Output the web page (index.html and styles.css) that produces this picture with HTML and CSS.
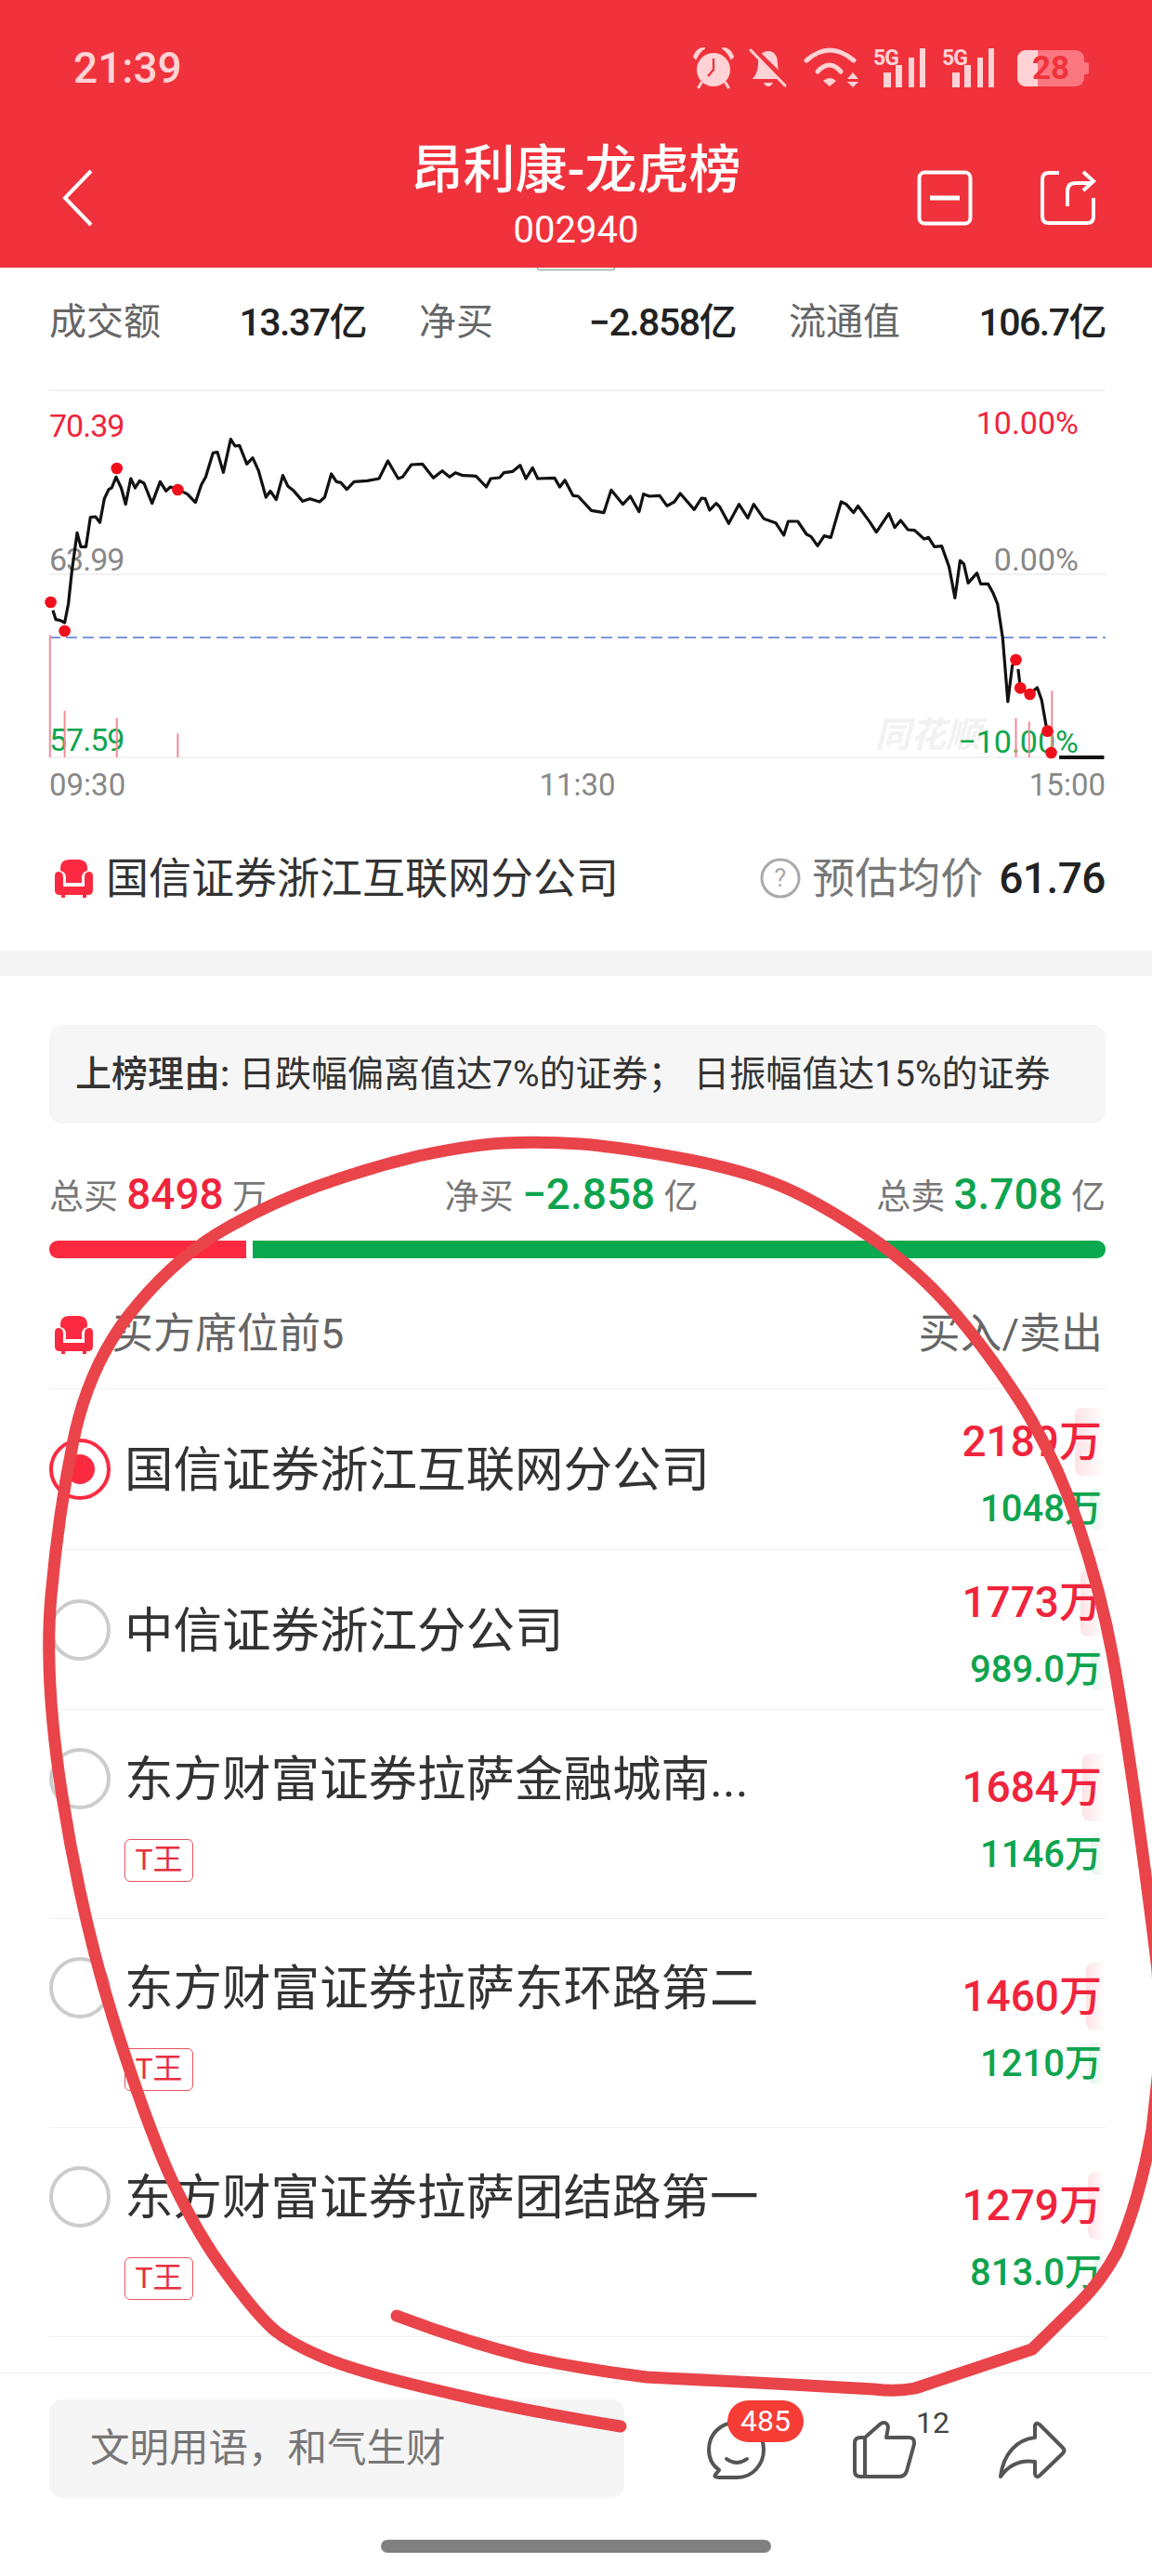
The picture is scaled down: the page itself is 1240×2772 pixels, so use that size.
FILE: index.html
```html
<!DOCTYPE html>
<html lang="zh-CN">
<head>
    <meta charset="UTF-8">
    <meta name="viewport" content="width=device-width, initial-scale=1.0">
    <title>昂利康-龙虎榜</title>
    <link rel="stylesheet" href="styles.css">
</head>
<body>
    <header class="top">
        <div class="status">
            <span class="clock">21:39</span>
            <div class="status-icons">
                <svg class="ic-alarm" width="46" height="46" viewBox="0 0 46 46">
                    <circle cx="23" cy="25" r="18" fill="#ffd3d6"/>
                    <path d="M2 11 Q5 2 13 2 Q8 5 4 13Z M44 11 Q41 2 33 2 Q38 5 42 13Z" fill="#ffd3d6" stroke="#ffd3d6" stroke-width="2" stroke-linejoin="round"/>
                    <path d="M10 39 L7 44 M36 39 L39 44" stroke="#ffd3d6" stroke-width="3" stroke-linecap="round"/>
                    <path d="M23 13 V25 L17 32" fill="none" stroke="#f0323c" stroke-width="2.4"/>
                </svg>
                <svg class="ic-bell" width="40" height="42" viewBox="0 0 40 42">
                    <path d="M20 3 C27 3 30 9 30 16 C30 24 33 28 36 33 H3 C6 29 9 25 9 16 C9 9 13 3 20 3Z" fill="#ffd3d6"/>
                    <path d="M15 37 H25 Q23 41 20 41 Q17 41 15 37Z" fill="#ffd3d6"/>
                    <path d="M3 1 L42 39" stroke="#f0323c" stroke-width="7"/>
                    <path d="M1 2 L38 40" stroke="#ffd3d6" stroke-width="3" stroke-linecap="round"/>
                </svg>
                <svg class="ic-wifi" width="60" height="44" viewBox="0 0 60 44">
                    <path d="M3 14 Q28 -8 54 14" fill="none" stroke="#ffd3d6" stroke-width="5" stroke-linecap="round"/>
                    <path d="M15 26 Q28 12 40 26" fill="none" stroke="#ffd3d6" stroke-width="5" stroke-linecap="round"/>
                    <path d="M21 36 Q28 30 35 36 L28 42Z" fill="#ffd3d6"/>
                    <path d="M47 34 L53 27 L59 34Z M47 37 L59 37 L53 43Z" fill="#ffd3d6"/>
                </svg>
                <svg class="ic-signal" width="60" height="44" viewBox="0 0 60 44">
                    <text x="0" y="19" class="ic-5g">5G</text>
                    <path d="M11 27 H19 V43 H11Z M24 19 H31 V43 H24Z M38 11 H44 V43 H38Z M50 1 H56 V43 H50Z" fill="#ffd3d6"/>
                </svg>
                <svg class="ic-signal" width="60" height="44" viewBox="0 0 60 44">
                    <text x="0" y="19" class="ic-5g">5G</text>
                    <path d="M11 27 H19 V43 H11Z M24 19 H31 V43 H24Z M38 11 H44 V43 H38Z M50 1 H56 V43 H50Z" fill="#ffd3d6"/>
                </svg>
                <div class="battery"><i class="battery-fill"></i><span>28</span></div>
            </div>
        </div>
        <div class="nav">
            <svg class="back" width="36" height="62" viewBox="0 0 36 62">
                <path d="M32 2 L4 31 L32 60" fill="none" stroke="#fff" stroke-width="4"/>
            </svg>
            <div class="nav-title">
                <h1>昂利康-龙虎榜</h1>
                <div class="code">002940</div>
            </div>
            <div class="nav-icons">
                <svg width="60" height="60" viewBox="0 0 60 60">
                    <rect x="2.5" y="2.5" width="55" height="55" rx="6" fill="none" stroke="#fff" stroke-width="4"/>
                    <path d="M14 30 H46" stroke="#fff" stroke-width="5"/>
                </svg>
                <svg width="60" height="60" viewBox="0 0 60 60">
                    <path d="M20 3 H9 Q2 3 2 10 V50 Q2 57 9 57 H50 Q57 57 57 50 V30" fill="none" stroke="#fff" stroke-width="4"/>
                    <path d="M29 39 V23 Q29 14 38 14 H55 M46 2 L57 12 L46 22" fill="none" stroke="#fff" stroke-width="4"/>
                </svg>
            </div>
        </div>
    </header>
    <div class="peek"></div>

    <section class="stats">
        <div class="stat"><span class="stat-label">成交额</span><span class="stat-value">13.37亿</span></div>
        <div class="stat"><span class="stat-label">净买</span><span class="stat-value">−2.858亿</span></div>
        <div class="stat"><span class="stat-label">流通值</span><span class="stat-value">106.7亿</span></div>
    </section>

    <section class="chart-wrap">
        <div class="chart">
            <span class="mark">同花顺</span>
            <span class="tick left up tick-top">70.39</span>
            <span class="tick right up tick-top2">10.00%</span>
            <span class="tick left flat tick-mid">63.99</span>
            <span class="tick right flat tick-mid">0.00%</span>
            <span class="tick left down tick-low">57.59</span>
            <span class="tick right down tick-low2">−10.00%</span>
            <svg class="chart-svg" viewBox="67 60 1438 1188" preserveAspectRatio="none">
                <g class="grid">
                    <path d="M67 60 H1505"/>
                    <path d="M67 653 H1505"/>
                    <path d="M67 1245 H1505"/>
                </g>
                <path class="avg" d="M67 858 H1505"/>
                <g class="vol">
                    <path d="M68 850 V1245"/>
                    <path d="M88 1095 V1245"/>
                    <path d="M159 1118 V1245"/>
                    <path d="M242 1168 V1245"/>
                    <path d="M1383 1118 V1245"/>
                    <path d="M1401 1130 V1245"/>
                    <path d="M1432 1030 V1245"/>
                </g>
                <polyline class="price" points="72,770 76,800 82,803 88,810 93,750 98,640 105,520 110,565 117,565 123,470 130,468 136,487 142,410 148,380 152,375 158,340 165,375 171,428 178,345 184,375 190,352 196,360 207,425 218,355 226,385 232,372 242,380 255,395 266,422 274,365 280,340 290,262 296,260 304,325 314,218 320,240 326,238 336,298 344,278 352,320 362,405 368,385 376,413 385,335 392,370 400,385 412,418 422,410 435,420 442,405 451,330 458,355 464,358 472,380 482,355 500,352 516,345 528,288 542,345 548,340 560,300 575,298 590,343 602,320 612,340 620,326 630,335 648,337 662,372 668,345 680,342 686,326 698,322 708,302 716,345 725,310 732,345 755,343 762,372 769,350 780,400 787,402 805,448 822,455 832,382 848,428 858,402 870,452 876,395 884,402 898,400 908,433 918,420 926,393 945,445 955,408 960,410 966,447 975,425 980,437 992,490 1006,428 1018,472 1026,428 1040,475 1056,488 1067,528 1073,483 1086,483 1098,525 1104,532 1113,562 1122,530 1131,535 1145,420 1152,428 1162,455 1168,433 1184,485 1193,518 1210,458 1218,503 1226,480 1236,510 1245,512 1258,540 1264,535 1272,565 1282,563 1292,630 1300,730 1307,610 1312,620 1318,682 1330,650 1335,685 1345,685 1352,715 1358,750 1365,860 1372,1065 1378,950 1383,930"/>
                <polyline class="price" points="1386,960 1389,1020 1402,1040 1412,1020 1418,1060 1425,1155"/>
                <path class="price price-end" d="M1442 1245 H1503"/>
                <g class="dots">
                    <ellipse cx="69" cy="744" rx="8" ry="19"/>
                    <ellipse cx="88" cy="837" rx="8" ry="19"/>
                    <ellipse cx="159" cy="312" rx="8" ry="19"/>
                    <ellipse cx="242" cy="381" rx="8" ry="19"/>
                    <ellipse cx="1383" cy="930" rx="8" ry="19"/>
                    <ellipse cx="1389" cy="1021" rx="8" ry="19"/>
                    <ellipse cx="1402" cy="1041" rx="8" ry="19"/>
                    <ellipse cx="1426" cy="1160" rx="8" ry="19"/>
                    <ellipse cx="1431" cy="1230" rx="8" ry="19"/>
                </g>
            </svg>
        </div>
        <div class="times"><span>09:30</span><span>11:30</span><span>15:00</span></div>
    </section>

    <section class="current">
        <div class="current-name">
            <svg class="sofa" width="44" height="44" viewBox="0 0 44 44"><path d="M8 12 Q8 2 17 2 H28 Q37 2 37 12 V14 Q31 15 31 22 V27 H14 V22 Q14 15 8 14Z M2 20 Q2 15 6 15 Q11 15 11 21 V31 H34 V21 Q34 15 39 15 Q43 15 43 20 V35 Q43 40 38 40 H36 V43 H32 V40 H13 V43 H9 V40 H7 Q2 40 2 35Z" fill="#fb2a41"/></svg>
            <span>国信证券浙江互联网分公司</span>
        </div>
        <div class="current-price">
            <svg width="44" height="44" viewBox="0 0 44 44">
                <circle cx="22" cy="22" r="20" fill="none" stroke="#aaa" stroke-width="3"/>
                <text x="22" y="31" class="ic-help">?</text>
            </svg>
            <span class="current-label">预估均价</span>
            <span class="current-num">61.76</span>
        </div>
    </section>

    <div class="band"></div>

    <section class="board">
        <div class="reason"><b>上榜理由:</b> 日跌幅偏离值达7%的证券； 日振幅值达15%的证券</div>

        <div class="totals">
            <div>总买 <b class="up">8498</b> 万</div>
            <div>净买 <b class="down">−2.858</b> 亿</div>
            <div>总卖 <b class="down">3.708</b> 亿</div>
        </div>
        <div class="ratio"><i class="ratio-buy"></i><i class="ratio-sell"></i></div>

        <div class="list-head">
            <div class="list-title">
                <svg class="sofa" width="44" height="44" viewBox="0 0 44 44"><path d="M8 12 Q8 2 17 2 H28 Q37 2 37 12 V14 Q31 15 31 22 V27 H14 V22 Q14 15 8 14Z M2 20 Q2 15 6 15 Q11 15 11 21 V31 H34 V21 Q34 15 39 15 Q43 15 43 20 V35 Q43 40 38 40 H36 V43 H32 V40 H13 V43 H9 V40 H7 Q2 40 2 35Z" fill="#fb2a41"/></svg>
                <span>买方席位前5</span>
            </div>
            <span>买入/卖出</span>
        </div>

        <div class="row">
            <div class="seat">
                <i class="radio radio-on"></i>
                <div class="seat-info"><div class="seat-name">国信证券浙江互联网分公司</div></div>
            </div>
            <div class="amounts">
                <div class="amt amt-buy"><i style="width:33px"></i><span>2189万</span></div>
                <div class="amt amt-sell"><i style="width:17px"></i><span>1048万</span></div>
            </div>
        </div>
        <div class="row">
            <div class="seat">
                <i class="radio"></i>
                <div class="seat-info"><div class="seat-name">中信证券浙江分公司</div></div>
            </div>
            <div class="amounts">
                <div class="amt amt-buy"><i style="width:27px"></i><span>1773万</span></div>
                <div class="amt amt-sell"><i style="width:16px"></i><span>989.0万</span></div>
            </div>
        </div>
        <div class="row row-tall">
            <div class="seat">
                <i class="radio"></i>
                <div class="seat-info">
                    <div class="seat-name">东方财富证券拉萨金融城南...</div>
                    <span class="tag">T王</span>
                </div>
            </div>
            <div class="amounts">
                <div class="amt amt-buy"><i style="width:25px"></i><span>1684万</span></div>
                <div class="amt amt-sell"><i style="width:16px"></i><span>1146万</span></div>
            </div>
        </div>
        <div class="row row-tall">
            <div class="seat">
                <i class="radio"></i>
                <div class="seat-info">
                    <div class="seat-name">东方财富证券拉萨东环路第二</div>
                    <span class="tag">T王</span>
                </div>
            </div>
            <div class="amounts">
                <div class="amt amt-buy"><i style="width:21px"></i><span>1460万</span></div>
                <div class="amt amt-sell"><i style="width:18px"></i><span>1210万</span></div>
            </div>
        </div>
        <div class="row row-tall">
            <div class="seat">
                <i class="radio"></i>
                <div class="seat-info">
                    <div class="seat-name">东方财富证券拉萨团结路第一</div>
                    <span class="tag">T王</span>
                </div>
            </div>
            <div class="amounts">
                <div class="amt amt-buy"><i style="width:19px"></i><span>1279万</span></div>
                <div class="amt amt-sell"><i style="width:12px"></i><span>813.0万</span></div>
            </div>
        </div>
    </section>

    <footer class="bottom">
        <div class="say">文明用语，和气生财</div>
        <div class="actions">
            <div class="act act-comment">
                <svg width="66" height="66" viewBox="0 0 66 66">
                    <path d="M14 62 H34 C50 62 62 48 62 32 C62 15 49 3 32 3 C15 3 3 16 3 32 C3 41 7 49 14 54 L10 59 Q8 62 14 62Z" fill="none" stroke="#555" stroke-width="4" stroke-linejoin="round"/>
                    <path d="M22 42 Q33 50 44 42" fill="none" stroke="#555" stroke-width="4" stroke-linecap="round"/>
                </svg>
                <span class="badge">485</span>
            </div>
            <div class="act act-like">
                <svg width="68" height="64" viewBox="0 0 68 64">
                    <path d="M13 18 L30 3 Q37 0 38 7 L36 18 H60 Q67 18 66 25 L58 54 Q56 60 50 60 H8 Q2 60 2 54 V24 Q2 18 8 18 H13 V60" fill="none" stroke="#555" stroke-width="4" stroke-linejoin="round"/>
                </svg>
                <span class="count">12</span>
            </div>
            <div class="act">
                <svg width="72" height="64" viewBox="0 0 72 64">
                    <path d="M2 60 C5 35 20 20 39 18 V5 Q40 1 44 4 L69 29 Q72 32 69 35 L44 59 Q40 62 39 57 V44 C25 42 12 46 2 60Z" fill="none" stroke="#555" stroke-width="4" stroke-linejoin="round"/>
                </svg>
            </div>
        </div>
    </footer>
    <div class="home-bar"></div>

    <!-- hand drawn circle on top of the screenshot -->
    <svg class="scribble" width="1240" height="2772" viewBox="0 0 1240 2772">
        <path d="M668 2611 Q553 2592 474 2573 Q395 2555 356 2540 Q316 2524 296 2508 Q277 2492 245 2448 Q213 2405 185 2346 Q158 2287 122 2173 Q87 2060 67 1933 Q47 1806 55 1717 Q63 1628 79 1550 Q95 1472 138 1416 Q182 1360 233 1328 Q285 1297 340 1277 Q395 1257 450 1244 Q506 1232 543 1230 Q581 1228 626 1231 Q672 1235 731 1246 Q791 1257 830 1272 Q870 1287 925 1323 Q981 1360 1020 1404 Q1060 1449 1100 1511 Q1139 1574 1162 1645 Q1186 1717 1198 1784 Q1210 1851 1224 1951 Q1238 2052 1246 2120 L1250 2200 L1240 2292 Q1226 2370 1202 2424 Q1185 2455 1162 2478 L1111 2528 L985 2570 Q965 2574 941 2571 Q820 2564 696 2558 Q630 2550 569 2537 Q495 2518 427 2492"/>
    </svg>
</body>
</html>
```

FILE: styles.css
```css
* {
    box-sizing: border-box;
}
html, body {
    margin: 0;
    padding: 0;
}
body {
    position: relative;
    width: 1240px;
    height: 2772px;
    overflow: hidden;
    background-color: #fff;
    font-family: Roboto, "Noto Sans CJK SC", sans-serif;
    color: #333;
}
svg {
    display: block;
    overflow: visible;
}
i {
    font-style: normal;
}
.up {
    color: #f0243c;
}
.down {
    color: #0ea44e;
}
.flat {
    color: #888;
}

/* header */
.top {
    height: 288px;
    background-color: #f0323c;
    color: #fff;
}
.status {
    height: 146px;
    padding: 0 73px 0 79px;
    display: flex;
    justify-content: space-between;
    align-items: center;
}
.clock {
    font-size: 46px;
    font-weight: 500;
    color: #ffd3d6;
}
.status-icons {
    display: flex;
    align-items: center;
}
.ic-alarm {
    margin-right: 16px;
}
.ic-bell {
    margin-right: 18px;
}
.ic-wifi {
    margin-right: 15px;
}
.ic-signal {
    margin-right: 14px;
}
.ic-signal + .battery {
    margin-left: 7px;
}
.ic-5g {
    font-family: Roboto, sans-serif;
    font-size: 23px;
    font-weight: 700;
    letter-spacing: -1px;
    fill: #ffd3d6;
}
.battery {
    position: relative;
    width: 72px;
    height: 39px;
    border-radius: 9px;
    background-color: #fa7780;
    text-align: center;
    font-size: 35px;
    font-weight: 700;
    line-height: 39px;
    color: #f0323c;
}
.battery::after {
    content: "";
    position: absolute;
    left: 72px;
    top: 13px;
    width: 5px;
    height: 13px;
    border-radius: 0 3px 3px 0;
    background-color: #fa7780;
}
.battery span {
    position: relative;
}
.battery-fill {
    position: absolute;
    left: 0;
    top: 0;
    bottom: 0;
    width: 22px;
    border-radius: 9px 0 0 9px;
    background-color: #ffd3d6;
}
.nav {
    display: grid;
    grid-template-columns: 1fr auto 1fr;
    align-items: start;
    padding: 4px 60px 0 60px;
}
.back {
    margin: 32px 0 0 6px;
}
.nav-title {
    text-align: center;
}
.nav-title h1 {
    margin: 0;
    font-size: 56px;
    font-weight: 500;
    line-height: 66px;
}
.code {
    margin-top: 8px;
    font-size: 40px;
    line-height: 48px;
}
.nav-icons {
    margin-top: 33px;
    display: flex;
    justify-content: flex-end;
    gap: 73px;
}
.peek {
    width: 84px;
    height: 3px;
    margin: 0 auto;
    border: 1px solid #6aa985;
    border-top: 0;
    border-radius: 0 0 3px 3px;
}

/* stats */
.stats {
    display: grid;
    grid-template-columns: repeat(3, 1fr);
    column-gap: 57px;
    padding: 31px 50px 0 53px;
    height: 129px;
}
.stat {
    display: flex;
    justify-content: space-between;
    font-size: 40px;
    line-height: 50px;
}
.stat-label {
    color: #666;
}
.stat-value {
    font-size: 41px;
    font-weight: 500;
    letter-spacing: -1.5px;
    color: #222;
}

/* chart */
.chart-wrap {
    padding: 0 50px 0 53px;
}
.chart {
    position: relative;
    height: 396px;
}
.chart-svg {
    position: relative;
    width: 100%;
    height: 396px;
}
.grid path {
    fill: none;
    stroke: #f1f1f1;
    stroke-width: 2;
    vector-effect: non-scaling-stroke;
}
.avg {
    fill: none;
    stroke: #7d97dc;
    stroke-width: 2;
    stroke-dasharray: 12 6;
    vector-effect: non-scaling-stroke;
}
.vol path {
    fill: none;
    stroke: #f28a97;
    stroke-width: 2;
    vector-effect: non-scaling-stroke;
}
.price {
    fill: none;
    stroke: #111;
    stroke-width: 3.2;
    stroke-linejoin: round;
    vector-effect: non-scaling-stroke;
}
.price-end {
    stroke-width: 4;
}
.dots ellipse {
    fill: #f0101c;
}
.tick {
    position: absolute;
    font-size: 34px;
    letter-spacing: -1px;
    line-height: 40px;
}
.tick.left {
    left: 0;
}
.tick.right {
    right: 29px;
    letter-spacing: 0;
}
.tick-top {
    top: 18px;
}
.tick-top2 {
    top: 15px;
}
.tick-mid {
    top: 162px;
}
.tick-low {
    top: 356px;
}
.tick-low2 {
    top: 358px;
}
.mark {
    position: absolute;
    left: 889px;
    top: 349px;
    font-size: 38px;
    font-style: italic;
    font-weight: 700;
    line-height: 44px;
    color: #f2f2f2;
}
.times {
    margin-top: 9px;
    display: flex;
    justify-content: space-between;
    font-size: 33px;
    line-height: 40px;
    color: #888;
}

/* current seat */
.current {
    margin-top: 50px;
    padding: 0 50px 48px 53px;
    display: flex;
    justify-content: space-between;
    align-items: center;
    line-height: 60px;
}
.current-name {
    display: flex;
    align-items: center;
    gap: 13px;
    font-size: 46px;
}
.sofa {
    margin-left: 4px;
}
.current-price {
    display: flex;
    align-items: center;
    font-size: 46px;
}
.ic-help {
    font-family: Roboto, sans-serif;
    font-size: 27px;
    text-anchor: middle;
    fill: #aaa;
}
.current-label {
    margin-left: 12px;
    color: #777;
}
.current-num {
    margin-left: 17px;
    font-weight: 500;
    letter-spacing: -0.5px;
    color: #222;
}
.band {
    height: 27px;
    background-color: #f5f5f5;
}

/* board */
.board {
    padding: 53px 50px 0 53px;
}
.reason {
    height: 106px;
    padding-left: 28px;
    border-radius: 14px;
    background-color: #f6f6f6;
    font-size: 39px;
    line-height: 106px;
    white-space: nowrap;
}
.reason b {
    font-weight: 500;
}
.totals {
    margin-top: 48px;
    height: 56px;
    display: flex;
    justify-content: space-between;
    font-size: 37px;
    line-height: 56px;
    color: #777;
}
.totals b {
    font-size: 46px;
    font-weight: 500;
}
.ratio {
    margin-top: 22px;
    height: 19px;
    display: flex;
    gap: 7px;
}
.ratio-buy {
    width: 212px;
    background-color: #fb2a41;
    border-radius: 9px 0 0 9px;
}
.ratio-sell {
    flex: 1;
    background-color: #0aa84f;
    border-radius: 0 9px 9px 0;
}
.list-head {
    margin-top: 52px;
    height: 89px;
    display: flex;
    justify-content: space-between;
    align-items: flex-start;
    border-bottom: 1px solid #f0f0f0;
    padding-right: 3px;
    font-size: 45px;
    line-height: 60px;
    color: #666;
}
.list-title {
    display: flex;
    align-items: center;
    gap: 19px;
}
.row {
    height: 172.5px;
    display: flex;
    justify-content: space-between;
    align-items: center;
    border-bottom: 1px solid #f0f0f0;
}
.row-tall {
    height: 225px;
}
.seat {
    display: flex;
    align-items: flex-start;
}
.radio {
    flex-shrink: 0;
    position: relative;
    width: 66px;
    height: 66px;
    margin-top: 2px;
    border: 4px solid #ccc;
    border-radius: 50%;
}
.radio-on {
    border-color: #fb2a41;
}
.radio-on::after {
    content: "";
    position: absolute;
    left: 13px;
    top: 13px;
    width: 32px;
    height: 32px;
    border-radius: 50%;
    background-color: #fb2a41;
}
.seat-info {
    margin-left: 15px;
}
.seat-name {
    padding-top: 3px;
    font-size: 52.5px;
    line-height: 66px;
    white-space: nowrap;
}
.tag {
    display: block;
    width: 74px;
    height: 46px;
    margin-top: 31px;
    border: 1px solid #e8545f;
    border-radius: 6px;
    text-align: center;
    font-size: 32px;
    line-height: 42px;
    color: #e62f3f;
}
.amounts {
    display: flex;
    flex-direction: column;
    align-items: flex-end;
    gap: 13px;
}
.amt {
    position: relative;
    padding-right: 4px;
    white-space: nowrap;
}
.amt span {
    position: relative;
}
.amt i {
    position: absolute;
    right: 0;
    top: 0;
    bottom: 0;
    border-radius: 8px 0 0 8px;
}
.amt-buy {
    height: 73px;
    font-size: 46px;
    font-weight: 500;
    line-height: 73px;
    color: #f0243c;
}
.amt-buy i {
    background: linear-gradient(to right, #fde3e6, #fff);
}
.amt-sell {
    height: 45px;
    font-size: 40px;
    font-weight: 500;
    line-height: 45px;
    color: #0ea44e;
}
.amt-sell i {
    background: linear-gradient(to right, #e0f5e8, #fff);
}

/* footer */
.bottom {
    margin-top: 38px;
    height: 135px;
    padding: 28px 0 0 53px;
    border-top: 1px solid #eee;
    display: flex;
}
.say {
    width: 619px;
    height: 106px;
    padding-left: 44px;
    border-radius: 14px;
    background-color: #f5f5f5;
    font-size: 42.5px;
    line-height: 106px;
    color: #777;
}
.actions {
    display: flex;
    align-items: center;
    height: 106px;
    padding-top: 4px;
    margin-left: 88px;
}
.act {
    position: relative;
}
.act-comment {
    margin-right: 92px;
}
.act-like {
    margin-right: 89px;
}
.badge {
    position: absolute;
    left: 23px;
    top: -21px;
    width: 82px;
    height: 45px;
    border-radius: 23px;
    background-color: #f53c35;
    text-align: center;
    font-size: 32px;
    line-height: 45px;
    color: #fff;
}
.count {
    position: absolute;
    left: 68px;
    top: -16px;
    font-size: 32px;
    line-height: 36px;
    color: #444;
}
.home-bar {
    width: 420px;
    height: 14px;
    margin: 45px auto 0;
    border-radius: 7px;
    background-color: #808080;
}

/* red pen over the page */
.scribble {
    position: absolute;
    left: 0;
    top: 0;
    pointer-events: none;
}
.scribble path {
    fill: none;
    stroke: #e9444a;
    stroke-width: 13;
    stroke-linecap: round;
    stroke-linejoin: round;
}
```
